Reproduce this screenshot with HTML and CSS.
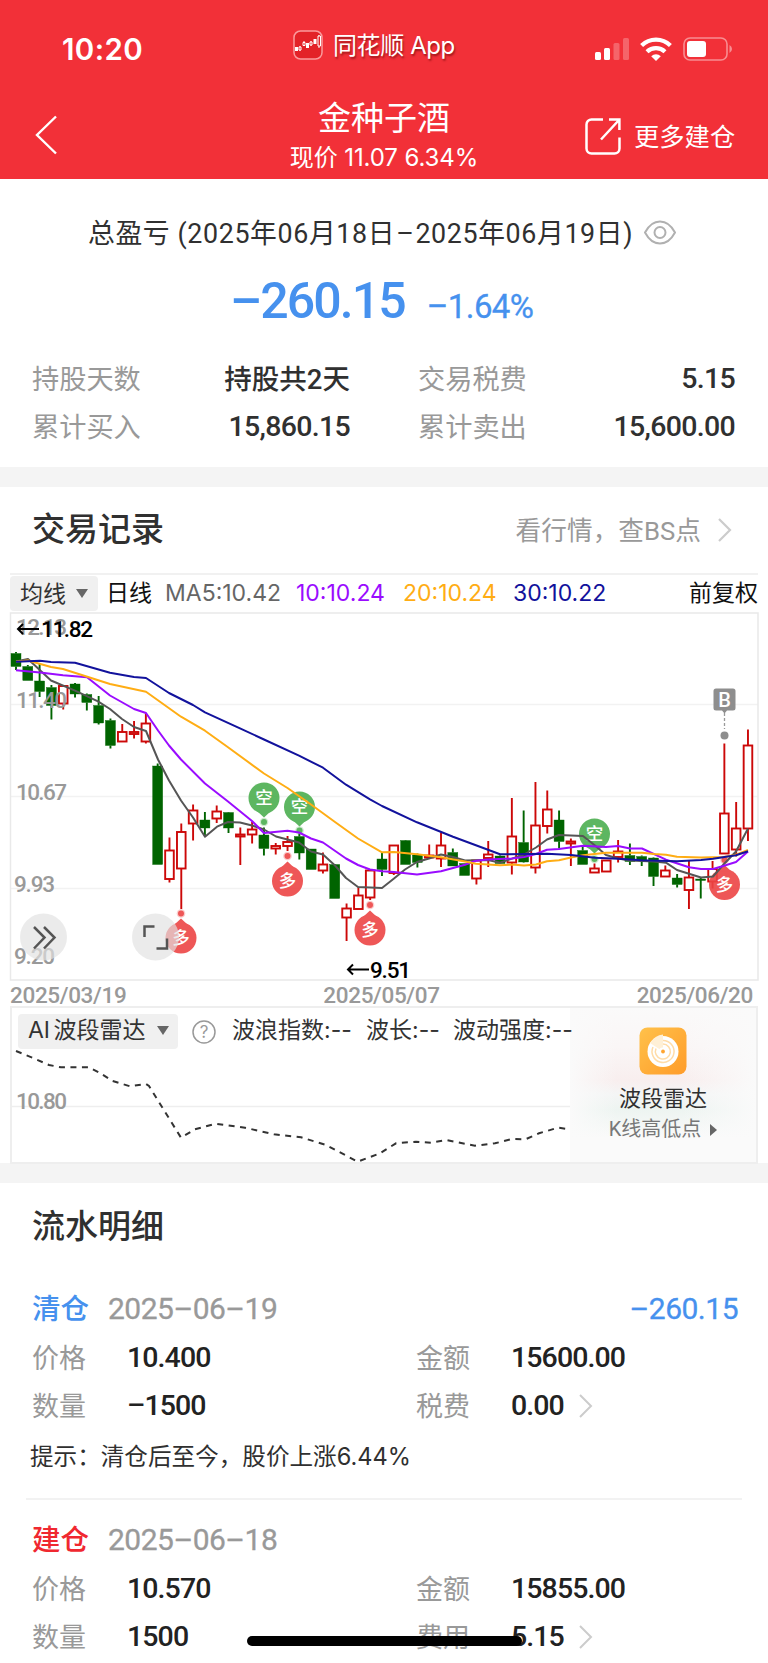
FILE: index.html
```html
<!DOCTYPE html>
<html lang="zh-CN">

<head>
    <meta charset="UTF-8">
    <meta name="viewport" content="width=device-width, initial-scale=1.0">
    <title>金种子酒</title>
    <link rel="stylesheet" href="styles.css">
</head>

<body>
    <header class="header">
        <div class="status-bar">
            <span class="time">10:20</span>
            <div class="app-name">
                <svg width="30" height="30" viewBox="0 0 30 30">
                    <rect x="1" y="1" width="28" height="28" rx="6.5" fill="#e32228" stroke="#fa9a9c" stroke-width="1.5" />
                    <g fill="#fff" stroke="#fff">
                        <path d="M3.500 17v4M14.500 13v5M22 9v5" stroke-width="3" />
                        <path d="M7 16v5M11 11v5M18 11v5M26 5v13" stroke-width="1" />
                        <path d="M6 17h2v3h-2zM10 12.500h2v3h-2zM17 12h2v3h-2zM25 6h2.500v10h-2.500z" fill="#e32228" stroke-width="1" />
                    </g>
                </svg>
                <span>同花顺 App</span>
            </div>
            <div class="status-icons">
                <svg width="34" height="24" viewBox="0 0 34 24" fill="#fff">
                    <rect x="0" y="15" width="6" height="8" rx="1.500" />
                    <rect x="9" y="11" width="6" height="12" rx="1.500" />
                    <rect x="18.500" y="6" width="6" height="17" rx="1.500" opacity=".25" />
                    <rect x="28" y="1" width="6" height="22" rx="1.500" opacity=".25" />
                </svg>
                <svg width="32" height="24" viewBox="0 0 32 24" fill="none" stroke="#fff" stroke-width="4.200">
                    <path d="M1.600 8.500a20.500 20.500 0 0 1 28.800 0" />
                    <path d="M7 14.700a13 13 0 0 1 18 0" />
                    <path d="M11.200 19.200a7 7 0 0 1 9.600 0L16 24z" fill="#fff" stroke="none" />
                </svg>
                <svg width="49" height="24" viewBox="0 0 49 24">
                    <rect x="1" y="1" width="43" height="22" rx="6" fill="none" stroke="#fff" stroke-width="1.600" opacity=".45" />
                    <rect x="4" y="4" width="19" height="16" rx="3" fill="#fff" />
                    <path d="M46.500 8q2.500 1.500 2.500 4t-2.500 4z" fill="#fff" opacity=".45" />
                </svg>
            </div>
        </div>
        <div class="nav-bar">
            <svg class="back" width="24" height="42" viewBox="0 0 24 42">
                <path d="M22 2.500L3 21l19 18.500" fill="none" stroke="#fff" stroke-width="2.400" />
            </svg>
            <div class="nav-title">
                <h1>金种子酒</h1>
                <p>现价 11.07 6.34%</p>
            </div>
            <a href="#" class="more">
                <svg width="36" height="37" viewBox="0 0 36 37" fill="none" stroke="#fff" stroke-width="2.500">
                    <path d="M18 1.500H6.500a5 5 0 0 0-5 5v24a5 5 0 0 0 5 5h23a5 5 0 0 0 5-5V19.500" />
                    <path d="M16 21.500L34 2M24 1.600h10.400v10.400" />
                </svg>
                <span>更多建仓</span>
            </a>
        </div>
    </header>

    <section class="summary">
        <div class="summary-title">
            <span>总盈亏 (2025年06月18日<i>–</i>2025年06月19日)</span>
            <svg width="32" height="25" viewBox="0 0 32 25" fill="none" stroke="#b0b0b0" stroke-width="2">
                <path d="M1 12.500C5 5 10 1.500 16 1.500S27 5 31 12.500C27 20 22 23.500 16 23.500S5 20 1 12.500z" />
                <circle cx="16" cy="12.500" r="5.500" />
            </svg>
        </div>
        <div class="profit"><b>–260.15</b><span>–1.64%</span></div>
        <dl class="stats">
            <dt>持股天数</dt><dd class="cn">持股共2天</dd>
            <dt>交易税费</dt><dd>5.15</dd>
            <dt>累计买入</dt><dd>15,860.15</dd>
            <dt>累计卖出</dt><dd>15,600.00</dd>
        </dl>
    </section>

    <section class="records">
        <div class="section-head">
            <h2>交易记录</h2>
            <a href="#">
                <span>看行情，查BS点</span>
                <svg width="14" height="24" viewBox="0 0 14 24"><path d="M1 1l11 11L1 23" fill="none" stroke="#ccc" stroke-width="2.200" /></svg>
            </a>
        </div>

        <div class="ma-bar">
            <span class="select">均线<i class="caret"></i></span>
            <span class="period">日线</span>
            <span class="ma5">MA5:10.42</span>
            <span class="ma10">10:10.24</span>
            <span class="ma20">20:10.24</span>
            <span class="ma30">30:10.22</span>
            <span class="adjust">前复权</span>
        </div>

        <!-- K线图 -->
        <svg class="kline" width="768" height="370" viewBox="0 612 768 370">
            <path d="M10 704.500H758M10 796.500H758M10 888.500H758" stroke="#f2f2f2" stroke-width="1.500" />
            <rect x="10.500" y="613" width="747.500" height="367" fill="none" stroke="#e9e9e9" stroke-width="1.500" />
            <g id="candles"></g>
            <g class="axis">
                <text x="16" y="635" textLength="51">12.13</text>
                <text x="16" y="708" textLength="51">11.40</text>
                <text x="16" y="800" textLength="51">10.67</text>
                <text x="14" y="892" textLength="41">9.93</text>
                <text x="14" y="964" textLength="41">9.20</text>
            </g>
            <g id="pins"></g>
            <g id="lines" fill="none" stroke-width="2" stroke-linejoin="round"></g>
            <g class="extreme">
                <path d="M39 629H18M23 624l-5 5 5 5M369 969.500H348M353 964.500l-5 5 5 5" />
                <text x="41" y="637" textLength="52">11.82</text>
                <text x="370" y="977.500" textLength="41">9.51</text>
            </g>
            <g class="buy">
                <path d="M716 688.500h17q2.500 0 2.500 2.500v17q0 2.500-2.500 2.500h-6l-2.500 3-2.500-3h-6q-2.500 0-2.500-2.500v-17q0-2.500 2.500-2.500z" />
                <path d="M724.500 713v16" stroke="#999" stroke-width="1.300" stroke-dasharray="3 2" />
                <circle cx="724.500" cy="735.500" r="4" />
                <text x="724.500" y="706.500">B</text>
            </g>
            <g class="tools">
                <circle cx="43.500" cy="937" r="23.500" />
                <circle cx="155.500" cy="937" r="23.500" />
                <path d="M34 927l10.500 10.500L34 948.500M44 927l10.500 10.500L44 948.500" />
                <path d="M144.500 937v-10.500h10M156.500 948.500h10.500v-10" />
            </g>
        </svg>
        <div class="dates">
            <span>2025/03/19</span>
            <span>2025/05/07</span>
            <span>2025/06/20</span>
        </div>

        <!-- 波段雷达 -->
        <div class="radar">
            <svg class="radar-line" width="560" height="158" viewBox="10 1006 560 158">
                <path d="M10 1106.500H570" stroke="#eee" stroke-width="1.500" />
                <text class="axis" x="16" y="1109" textLength="51">10.80</text>
                <polyline points="16,1051 33,1058 49,1065 61,1067.300 89,1067.300 100,1073 112.500,1081 130,1086.300 146,1084 149,1086 181,1137.700 195,1129.300 215.500,1123.700 245,1127.700 274,1134.300 301,1137.300 326,1145 345,1155 357.500,1161.700 380,1153.300 396,1143.300 416,1141.700 431,1142.700 446,1140 475,1145.700 495,1143.300 512,1139 525.500,1139.300 539,1133.300 558,1127.700 570,1129.300" fill="none" stroke="#333" stroke-width="2" stroke-dasharray="6 5.500" />
            </svg>
            <div class="radar-panel">
                <svg width="48" height="48" viewBox="0 0 48 48">
                    <defs>
                        <linearGradient id="orange" x1="0" y1="0" x2="1" y2="1">
                            <stop offset="0" stop-color="#ffc14a" />
                            <stop offset="1" stop-color="#ff9c2a" />
                        </linearGradient>
                    </defs>
                    <rect x=".5" y=".5" width="47" height="47" rx="8" fill="url(#orange)" />
                    <circle cx="24" cy="24.500" r="15.500" fill="#fff" />
                    <g fill="none" stroke="#ffdca8" stroke-width="1.500">
                        <path d="M24 13.500a11 11 0 1 1-10 6.500" />
                        <path d="M24 17a7.500 7.500 0 1 1-7 4.500" />
                    </g>
                    <path d="M24 24.500L11 16Q16 8 24 7.500z" fill="#fff0d6" />
                    <circle cx="24" cy="24.500" r="4" fill="#fff" />
                    <circle cx="24" cy="24.500" r="1.900" fill="#ffa531" />
                </svg>
                <strong>波段雷达</strong>
                <span>K线高低点<i></i></span>
            </div>
            <div class="radar-head">
                <span class="select">AI 波段雷达<i class="caret"></i></span>
                <svg width="24" height="24" viewBox="0 0 24 24">
                    <circle cx="12" cy="12" r="11" fill="none" stroke="#999" stroke-width="1.500" />
                    <text x="12" y="18" text-anchor="middle" font-size="17" fill="#999">?</text>
                </svg>
                <span class="index">波浪指数:--</span>
                <span class="length">波长:--</span>
                <span>波动强度:--</span>
            </div>
        </div>
    </section>

    <section class="details">
        <h2>流水明细</h2>
        <div class="trade">
            <div class="trade-head"><b class="sell">清仓</b><time>2025–06–19</time><em>–260.15</em></div>
            <dl>
                <dt>价格</dt><dd>10.400</dd>
                <dt>金额</dt><dd>15600.00</dd>
                <dt>数量</dt><dd>–1500</dd>
                <dt>税费</dt>
                <dd>0.00<svg width="14" height="24" viewBox="0 0 14 24"><path d="M1 1l11 11L1 23" fill="none" stroke="#ccc" stroke-width="2" /></svg></dd>
            </dl>
            <p class="tip">提示：清仓后至今，股价上涨6.44%</p>
        </div>
        <div class="trade">
            <div class="trade-head"><b class="open">建仓</b><time>2025–06–18</time></div>
            <dl>
                <dt>价格</dt><dd>10.570</dd>
                <dt>金额</dt><dd>15855.00</dd>
                <dt>数量</dt><dd>1500</dd>
                <dt>费用</dt>
                <dd>5.15<svg width="14" height="24" viewBox="0 0 14 24"><path d="M1 1l11 11L1 23" fill="none" stroke="#ccc" stroke-width="2" /></svg></dd>
            </dl>
        </div>
    </section>

    <div class="home-indicator"></div>

    <script>
        // [最高, 实体上沿, 实体下沿, 最低, 涨(1)/跌(0)]
        const candles = [
            [652, 653.5, 666.5, 670, 0], [665, 666.5, 680.5, 680.5, 0], [663.5, 681, 691.5, 697, 0],
            [685, 687.5, 705.5, 719.5, 0], [685, 686, 703.5, 709.5, 1], [683, 684, 694, 697.5, 0],
            [693.5, 694.5, 702.5, 710.5, 0], [696, 705.5, 723, 724.5, 0], [718.5, 720.5, 745.5, 748.5, 0],
            [724, 732, 741.5, 741.5, 1], [721, 732, 734, 738.5, 1], [713.5, 723.5, 741.5, 743.5, 1],
            [763.5, 766, 864.5, 864.5, 0], [837.5, 850.5, 879, 882.5, 1], [823.5, 832, 868.5, 909, 1],
            [804.5, 810.5, 823.5, 840.5, 1], [812, 820, 828, 836, 0], [805.5, 811.5, 818.5, 823, 1],
            [812, 812.5, 828, 833, 0], [827.5, 834.5, 836.5, 865, 1], [821.5, 829.5, 834.5, 843.5, 1],
            [827.5, 835, 848.5, 855.5, 0], [843, 846, 848.5, 854.5, 1], [836, 842, 846, 851, 1],
            [833.5, 836.5, 853, 859.5, 0], [849, 849, 869.5, 869.5, 0], [852.5, 864.5, 870.5, 873.5, 1],
            [864, 864.5, 898.5, 898.5, 0], [903.5, 908.5, 917.5, 941, 1], [887.5, 895.5, 909, 909, 1],
            [870, 870.5, 897.5, 900, 1], [852.5, 859, 869.5, 876, 0], [845.5, 845.5, 873, 875, 1],
            [840, 840.5, 864.5, 864.5, 0], [853.5, 855, 862.5, 867.5, 0], [844.5, 855.5, 857.5, 859, 1],
            [832.5, 845.5, 858.5, 867, 1], [848.5, 852.5, 866, 866, 0], [863.5, 863.5, 875.5, 875.5, 0],
            [860, 860.5, 878.5, 884.5, 1], [841, 854.5, 858, 867, 1], [855.5, 856, 863.5, 863.5, 0],
            [798, 836.5, 862.5, 874.5, 1], [810.5, 842.5, 862, 862.5, 0], [782, 825.5, 867.5, 873.5, 1],
            [790.5, 809.5, 826, 833.5, 1], [810.5, 820, 841.5, 848.5, 0], [838.5, 841.5, 843.5, 866, 1],
            [845, 850.5, 864.5, 864.5, 0], [863.5, 868.5, 872.5, 872.5, 1], [860.5, 860.5, 871.5, 871.5, 1],
            [840, 851.5, 857, 862.5, 1], [843.5, 855.5, 861.5, 865, 0], [855.5, 856.5, 860.5, 866, 0],
            [857.5, 858, 876.5, 886, 0], [865.5, 870.5, 876.5, 876.5, 1], [874, 878, 884.5, 887.5, 0],
            [861, 877.5, 890, 909, 1], [877, 879, 880, 898.5, 0], [861, 869, 881.5, 888.5, 1],
            [743.5, 813.5, 853.5, 853.5, 1], [802, 828.5, 849.5, 856.5, 1], [729.5, 745.5, 828.5, 841, 1]
        ];

        const averages = {
            '#555': '16,661.5 28,659 51,680.500 75,690.700 98,701.300 110,709 122,719 134,727 146,731 158,759.500 169,780.500 181,800.500 193,817.500 205,836.700 217,826.700 228,822 240,822.500 252,825.500 264,829.500 276,836.500 287.500,839.500 299,842.500 311,851.500 323,854.500 335,865.500 346,878 358,887 382,888 394,878.500 405,869.500 417,862 429,858.500 441,854.500 453,857 465,860.500 488,860 500,862.700 524,854.500 536,847.500 547,839.500 559,835 583,836 595,845.500 606,855 618,858.500 630,860.500 654,861.500 666,862.700 677,870 701,877.500 713,876.500 724,864 736,851.500 748,828.500',
            '#9a0cff': '16,670.300 40,672.500 63,675.300 87,677.300 110,695.500 134,709 146,713 158,730.500 169,745.500 181,759.500 205,783.500 228,801.500 252,821 264,833 287.500,830.700 299,832.500 311,838.500 323,842.500 346,858.500 358,865 370,869.500 382,871.300 394,872 417,874.500 441,871.300 465,864.700 476,860.700 488,859.500 512,858.500 524,857 536,854 547,849.700 559,849 583,845.700 606,847 618,846 630,848.500 642,848.500 666,859.700 689,867.300 701,869 713,869 724,865.700 736,862 748,851.500',
            '#ffad14': '16,661.500 28,660.500 51,667 63,669 110,684 146,691.700 181,716.700 205,730.700 228,747.300 264,773.500 287.500,788 311,804.500 335,822 358,838.500 382,852.300 394,852 417,854.300 441,857.300 465,861.500 476,863.700 500,865.300 512,864.500 524,865.500 536,864.500 547,861.300 559,860.300 571,857.500 583,855.300 606,852.700 642,852.700 654,854 666,854.700 677,856.700 701,857.500 724,857 736,854.700 748,850',
            '#12129c': '16,661.700 40,660.700 51,662 75,662.700 110,672.700 134,677 146,678 169,693 193,705 205,712.300 240,728.300 264,739.500 299,755.700 323,767.700 346,784.700 370,799.300 382,806 417,822.300 453,836.700 488,849.700 500,854.300 547,853.700 571,855 595,857.700 618,858.700 642,860.300 677,861.300 701,860 713,858.700 736,855.300 748,851.300'
        };

        // [x, 圆心y, 圆点y, 类型]
        const pins = [
            [264, 798, 822, '空'], [299.5, 807, 830.5, '空'], [594.5, 834, 859, '空'],
            [181, 938, 913.5, '多'], [287.5, 881, 856, '多'], [370, 930, 905, '多'], [724.5, 884.5, 860, '多']
        ];

        const step = 11.806;
        document.querySelector('#candles').innerHTML = candles.map(([high, top, bottom, low, up], i) => {
            const x = 16 + step * i;
            const color = up ? '#cc0808' : '#006400';
            const inset = up ? 0.7 : 0;
            const h = Math.max(bottom - top, 1.5);
            return `<path d="M${x} ${high}V${top}M${x} ${bottom}V${low}" stroke="${color}" stroke-width="1.9"/>
                <rect x="${x - 5 + inset}" y="${top}" width="${10 - inset * 2}" height="${h}" fill="${up ? '#fff' : color}" stroke="${color}" stroke-width="${up ? 1.9 : 0.4}"/>`;
        }).join('');

        document.querySelector('#lines').innerHTML = Object.entries(averages)
            .map(([color, points]) => `<polyline points="${points}" stroke="${color}"/>`).join('');

        document.querySelector('#pins').innerHTML = pins.map(([x, y, dot, type]) => {
            const color = type === '空' ? '#4caf50' : '#ed4545';
            const dir = type === '空' ? 1 : -1;
            return `<g fill="${color}" opacity="0.9">
                <circle cx="${x}" cy="${y}" r="15.5"/>
                <path d="M${x - 7} ${y + 13 * dir}L${x} ${y + 19.5 * dir}L${x + 7} ${y + 13 * dir}z"/>
                <circle cx="${x}" cy="${dot}" r="4.3" opacity="0.3"/><circle cx="${x}" cy="${dot}" r="3"/>
                <text class="pin" x="${x}" y="${y + 6}">${type}</text></g>`;
        }).join('');
    </script>
</body>

</html>
```
FILE: styles.css
```css
* {
    box-sizing: border-box;
    margin: 0;
    padding: 0;
}

body {
    width: 768px;
    height: 1663px;
    overflow: hidden;
    background-color: #fff;
    color: #303030;
    font-family: Roboto, "Noto Sans CJK SC", sans-serif;
    white-space: nowrap;
}

a {
    color: inherit;
    text-decoration: none;
}

i,
em {
    font-style: normal;
}

svg {
    display: block;
    flex: none;
}

h2 {
    font-size: 33px;
    font-weight: 500;
    line-height: 40px;
}

/* 顶部 */
.header {
    height: 179px;
    background-color: #f23038;
    color: #fff;
}

.status-bar {
    display: grid;
    grid-template-columns: 293px 1fr 173px;
    height: 90px;
    padding-top: 20px;
}

.time {
    padding: 10px 0 0 62px;
    font-family: Inter, sans-serif;
    font-size: 29.500px;
    font-weight: 600;
    line-height: 38px;
    letter-spacing: .4px;
}

.app-name {
    display: flex;
    align-items: center;
    gap: 10px;
    height: 50px;
    font-family: Inter, "Noto Sans CJK SC", sans-serif;
    font-size: 24px;
    text-shadow: 1px 2px 2px rgba(90, 0, 0, .55);
}

.app-name span {
    padding-bottom: 4px;
    letter-spacing: -.4px;
}

.status-icons {
    display: flex;
    align-items: center;
    gap: 11px;
    height: 58px;
}

.nav-bar {
    display: grid;
    grid-template-columns: 240px 1fr 240px;
    height: 89px;
}

.back {
    margin: 24px 0 0 34px;
}

.nav-title {
    padding-top: 7px;
    text-align: center;
}

.nav-title h1 {
    font-size: 33px;
    font-weight: 400;
    line-height: 44px;
}

.nav-title p {
    font-family: Inter, "Noto Sans CJK SC", sans-serif;
    font-size: 24px;
    line-height: 34px;
    letter-spacing: -.1px;
}

.more {
    display: flex;
    align-items: center;
    gap: 13px;
    height: 92px;
    margin-left: 57px;
    font-size: 25.300px;
}

.more span {
    padding-bottom: 3px;
}

/* 总盈亏 */
.summary {
    height: 308px;
    padding-top: 32px;
    border-bottom: 20px solid #f4f4f4;
}

.summary-title {
    display: flex;
    align-items: center;
    gap: 11px;
    height: 42px;
    margin-left: 88px;
    font-size: 26.800px;
    letter-spacing: .63px;
}

.summary-title span {
    padding-bottom: 2px;
}

.summary-title i {
    margin: 0 1px;
}

.profit {
    display: flex;
    align-items: baseline;
    gap: 22px;
    height: 80px;
    padding: 18px 0 0 230px;
    color: #4691ee;
    line-height: 60px;
}

.profit b {
    font-size: 50px;
    font-weight: 500;
    letter-spacing: -1.900px;
}

.profit span {
    font-size: 33px;
    letter-spacing: -.6px;
    -webkit-text-stroke: .3px #4691ee;
}

.stats {
    display: grid;
    grid-template-columns: 118px 200px 186px 199px;
    grid-auto-rows: 48px;
    align-items: center;
    padding: 21px 0 0 32px;
}

.stats dt {
    padding-bottom: 3px;
    color: #999;
    font-size: 27.200px;
}

.stats dt:nth-of-type(even) {
    padding-left: 68px;
}

.stats dd {
    font-size: 28.500px;
    font-weight: 500;
    text-align: right;
    letter-spacing: -.7px;
}

.stats .cn {
    padding-bottom: 3px;
    font-size: 27.500px;
    letter-spacing: 0;
}

/* 交易记录 */
.records {
    height: 696px;
    border-bottom: 20px solid #f4f4f4;
}

.section-head {
    display: flex;
    justify-content: space-between;
    align-items: center;
    height: 86px;
    padding: 0 36px 0 32px;
}

.section-head a {
    display: flex;
    align-items: center;
    gap: 17px;
    color: #999;
    font-size: 25.700px;
}

.section-head a span {
    padding-bottom: 4px;
}

.ma-bar {
    display: flex;
    align-items: center;
    height: 39px;
    margin: 0 10px;
    border-top: 2px solid #f1f1f1;
    font-family: Inter, "Noto Sans CJK SC", sans-serif;
    font-size: 23px;
    line-height: 30px;
}

.ma-bar span {
    flex: none;
    padding-bottom: 2px;
}

.select {
    display: flex;
    align-items: center;
    justify-content: space-between;
    height: 35px;
    background-color: #f0f0f0;
    border-radius: 4px;
    color: #333;
}

.ma-bar .select {
    width: 88px;
    padding: 0 10px;
}

.caret {
    border: 6px solid transparent;
    border-top: 9px solid #666;
    border-bottom: 0;
}

.ma-bar .period {
    width: 67px;
    padding-left: 8px;
    color: #111;
}

.ma5 {
    width: 131px;
    color: #666;
}

.ma10 {
    width: 107px;
    color: #9a0cff;
}

.ma20 {
    width: 110px;
    color: #ffad14;
}

.ma30 {
    color: #12129c;
}

.adjust {
    margin-left: auto;
    color: #111;
}

.kline {
    font-size: 22px;
}

.axis {
    fill: #999;
    font-size: 22.500px;
    font-weight: 500;
}

.extreme {
    fill: #000;
    font-size: 22.500px;
    font-weight: 500;
}

.extreme path {
    fill: none;
    stroke: #000;
    stroke-width: 2;
}

.pin {
    fill: #fff;
    font-size: 17.500px;
    font-weight: 500;
    text-anchor: middle;
}

.buy {
    fill: #8e8e8e;
}

.buy text {
    fill: #fff;
    font-size: 20px;
    font-weight: 500;
    text-anchor: middle;
}

.tools circle {
    fill: rgba(226, 226, 226, .68);
}

.tools path {
    fill: none;
    stroke: #555;
    stroke-width: 2.500;
}

.dates {
    display: flex;
    justify-content: space-between;
    height: 24px;
    padding: 0 15px 0 10px;
    color: #999;
    font-size: 22.500px;
    font-weight: 500;
    line-height: 27px;
    letter-spacing: -.35px;
}

.radar {
    position: relative;
    display: flex;
    height: 158px;
    margin: 0 10px;
    border: 2px solid #eee;
}

.radar-line {
    margin: -2px 0 0 -2px;
}

.radar-panel {
    display: flex;
    flex-direction: column;
    align-items: center;
    flex: 1;
    padding: 19px 0 0;
    background-image: linear-gradient(90deg, #fafafa, transparent 25%, transparent 60%, #fafafa 100%),
        linear-gradient(#fafafa, #faf6f6 25%, #f8eeee 47%, #f4f5f5 56%, #edf4f1 66%, #fafafa 84%);
}

.radar-panel strong {
    margin-top: 8px;
    font-size: 22px;
    font-weight: 400;
    line-height: 32px;
}

.radar-panel span {
    display: flex;
    align-items: center;
    gap: 9px;
    color: #777;
    font-size: 20px;
    line-height: 29px;
}

.radar-panel i {
    border: 6px solid transparent;
    border-left: 7px solid #666;
    border-right: 0;
}

/* 叠在走势线上方的指标栏 */
.radar-head {
    position: absolute;
    top: 6px;
    left: 6px;
    display: flex;
    align-items: center;
    height: 35px;
    color: #333;
    font-family: Inter, "Noto Sans CJK SC", sans-serif;
    font-size: 23px;
    line-height: 33px;
}

.radar-head span {
    padding-bottom: 2px;
}

.radar-head .select {
    width: 160px;
    margin-right: 14px;
    padding: 0 9px 2px 10px;
    word-spacing: -3px;
}

.radar-head svg {
    margin-right: 16px;
}

.radar-head .index {
    width: 134px;
}

.radar-head .length {
    width: 87px;
}

/* 流水明细 */
.details h2 {
    height: 100px;
    padding: 24px 0 0 32px;
}

.trade {
    margin: 0 26px;
    padding: 0 0 0 6px;
}

.trade-head {
    display: flex;
    align-items: center;
    height: 50px;
    font-size: 30px;
    letter-spacing: -.5px;
}

.trade-head b {
    width: 76px;
    padding-bottom: 4px;
    font-size: 28.500px;
    font-weight: 500;
    letter-spacing: 0;
}

.trade-head time {
    color: #999;
    -webkit-text-stroke: .3px #999;
}

.trade-head em {
    margin: 0 4px 0 auto;
    color: #4691ee;
    -webkit-text-stroke: .3px #4691ee;
}

.trade .sell {
    color: #4691ee;
}

.trade .open {
    color: #f02830;
}

.trade dl {
    display: grid;
    grid-template-columns: 95px 289px 95px 1fr;
    grid-auto-rows: 48.500px;
    align-items: center;
}

.trade dt {
    padding-bottom: 2px;
    color: #999;
    font-size: 27px;
}

.trade dd {
    display: flex;
    align-items: center;
    gap: 15px;
    color: #222;
    font-size: 28.500px;
    font-weight: 500;
    letter-spacing: -.9px;
}

.trade .tip {
    height: 68px;
    padding-top: 10px;
    margin-left: -2px;
    font-family: Inter, "Noto Sans CJK SC", sans-serif;
    font-size: 23.600px;
    line-height: 34px;
}

.trade + .trade {
    padding-top: 14px;
    border-top: 2px solid #f2f2f2;
}

.home-indicator {
    position: fixed;
    left: 247px;
    bottom: 17px;
    width: 275px;
    height: 10px;
    border-radius: 5px;
    background-color: #000;
}
```
